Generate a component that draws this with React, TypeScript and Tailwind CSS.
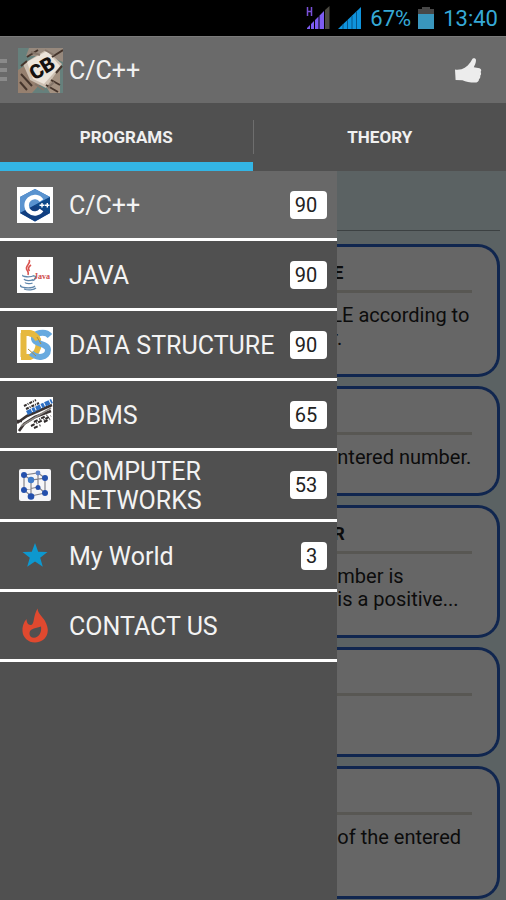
import React from "react";

interface MenuItem {
  label: string;
  count?: number;
  icon: React.ReactNode;
}

interface ProgramCard {
  title: string;
  lines: string[];
  // the drawer cuts through the first letter of these descriptions
  cut?: boolean;
}

const AppLogo = () => (
  <svg viewBox="0 0 45 45" className="size-[45px] shrink-0">
    <rect width="45" height="45" fill="#66807c" />
    <path d="M11 0H45V14L30 8L8 8Z" fill="#97897d" />
    <path d="M0 22L12 14L24 34L14 45H0Z" fill="#96806f" />
    <path d="M28 38L42 18V45H32Z" fill="#a39181" />
    <path d="M5 16L28 2L44 16L28 40L12 32Z" fill="#cdc0b2" />
    <path d="M9 14L29 3L42 18L26 36L15 31Z" fill="#ece4da" />
    <path d="M9 9L20 2M34 9L45 2M3 26L14 38M2 34L9 42M28 37L40 44M33 32L42 37M3 18L9 13M38 25L44 18" stroke="#45352c" strokeWidth="2" />
    <path d="M13 4L22 7M27 2L36 7M17 36L26 42M30 40L36 34" stroke="#85766a" strokeWidth="2" />
    <text
      x="24"
      y="27"
      transform="rotate(-32 24 20)"
      textAnchor="middle"
      fontSize="20"
      className="fill-[#15100e] font-black"
      style={{ fontFamily: "Roboto, sans-serif" }}
    >
      CB
    </text>
  </svg>
);

const ThumbIcon = () => (
  <svg viewBox="0 0 28 27" className="h-[27px] w-7" fill="#ececec">
    <path d="M1 12.5Q4 13 7.5 12.2C12 10.5 16 7 18.2 2.2C18.800 .8 22 .8 22 3.2C22 6 20.500 8.500 19.800 10.300L25.500 11.200C27.600 11.800 27.600 14 26.600 15C27.400 16 27.200 18 26.200 18.800C26.600 20.200 26 21.500 25 22.200C25 24.600 23 25.600 21 25.600C16 25.600 11.500 24.600 8.500 23.200L1.600 23Z" />
  </svg>
);

const CppIcon = () => (
  <svg viewBox="0 0 36 36" className="size-9 bg-white">
    <path d="M18 2L33 10V26L18 34.500L3 26V10Z" fill="#1f62ad" />
    <path d="M3 10L18 2L33 10L18 18L3 26Z" fill="#5a93cf" />
    <path d="M33 10V26L18 18Z" fill="#0d4788" />
    <path d="M3 26L18 18L33 26L18 34.500Z" fill="#123f80" />
    <path d="M24.500 13.500A8.200 8.200 0 1 0 24.500 23" fill="none" stroke="#fff" strokeWidth="4.500" />
    <path d="M22.500 18.300H27.500M25 16V20.600M28 18.300H32.500M30.300 16V20.600" stroke="#fff" strokeWidth="1.400" />
  </svg>
);

const JavaIcon = () => (
  <svg viewBox="0 0 36 36" className="size-9 bg-white" fill="none">
    <path d="M12 3C15 6 7 9 10 13C11 15 12 16 11 18M14 8C11 10 11 12 12.500 14" stroke="#d9534f" strokeWidth="1.600" />
    <path d="M6 18C4 20 14 20.500 17 18.500M7 22C8 24 14 24 16 22.500M8 25.500C9 27 14 27 15.500 26M16 19C20 18 19 23 15.500 23.500M4 28C1 31 15 32 18 29M7 32C11 33.500 17 33 19 31" stroke="#5f86ab" strokeWidth="1.300" />
    <text x="17" y="22" fontSize="8" fill="#cf4b4b" fontWeight="bold" style={{ fontFamily: "'Liberation Serif', serif" }}>
      Java
    </text>
  </svg>
);

const DataStructureIcon = () => (
  <svg viewBox="0 0 36 36" className="size-9 bg-white" fill="none">
    <path d="M6.500 6V30M4 6H12C24 7 25 25 13 30H4" stroke="#e6b93f" strokeWidth="6" />
    <path d="M33 9C28 3 16 6 17 12C18 18 31 16 31 23C31 31 20 32 14 26" stroke="#68aadf" strokeWidth="6" />
    <path d="M12 6C17 7 20 10 21 13" stroke="#e6b93f" strokeWidth="6" />
    <path d="M20 10L24 17M11 22L19 29" stroke="#b58f35" strokeWidth="1" />
  </svg>
);

const DbmsIcon = () => (
  <svg viewBox="0 0 36 36" className="size-9 bg-white" fill="none">
    <path d="M0 26L10 19L35 8M2 34L7 27L18 20L34 14M0 24L5 24" stroke="#3b3434" strokeWidth="2.600" />
    <path d="M4 29L14 23L34 11" stroke="#8a8580" strokeWidth="1.500" />
    <path d="M7 9L19 3M9 12L22 6" stroke="#35302f" strokeWidth="2" strokeDasharray="3 1 1 1" />
    <path d="M10 16L35 4" stroke="#2d6fc4" strokeWidth="4.500" strokeDasharray="5 1 3 1" />
    <path d="M14 29L34 19M17 31L24 28M27 25L33 22M17 25L31 18" stroke="#2f2b2b" strokeWidth="2" strokeDasharray="4 2 1 1" />
  </svg>
);

const NetworkIcon = () => (
  <svg viewBox="0 0 36 36" className="size-9">
    <rect x="2" y="2" width="32" height="32" rx="2" fill="#f6f6f8" />
    <path d="M7 8L21 6L28 11L14 13ZM7 8V23L14 29V13M21 6V20L28 26V11M7 23L21 20M14 29L28 26" fill="none" stroke="#85858d" strokeWidth="1.200" />
    <g fill="#2450ad">
      <circle cx="7" cy="8" r="3" />
      <circle cx="28" cy="11" r="3" />
      <circle cx="7" cy="23" r="3" />
      <circle cx="28" cy="26" r="3" />
      <circle cx="14" cy="29.500" r="3.300" />
      <circle cx="21" cy="20.500" r="2.500" />
    </g>
    <circle cx="21" cy="6" r="2.400" fill="#5b83cc" />
    <circle cx="14" cy="13" r="3.200" fill="#3f7bc9" />
  </svg>
);

const StarIcon = () => (
  <svg viewBox="0 0 36 36" className="size-9" fill="#0d98cf">
    <path d="M18 5L21.200 13.800L30.500 14L23.200 19.800L25.800 28.800L18 23.600L10.200 28.800L12.800 19.800L5.500 14L14.800 13.800Z" />
  </svg>
);

const FireIcon = () => (
  <svg viewBox="0 0 36 36" className="size-9">
    <path
      fill="#e0492f"
      fillRule="evenodd"
      d="M20.500 .5C21 6 26 9 28 13C30 17 31.500 21 30.500 25C29 31 24 34.500 18 34.500C11 34.500 6 29.500 5.500 23.500C5 19 6.500 14.500 9.500 11C9.500 14 11 17 13.500 17C18 17 15.500 9 20.500 .5ZM24 18.500C20 20 13 20 12.500 25C12.300 28 14 29.800 17 29.800C21.500 29.500 25 25 24 18.500Z"
    />
  </svg>
);

const menu: MenuItem[] = [
  { label: "C/C++", count: 90, icon: <CppIcon /> },
  { label: "JAVA", count: 90, icon: <JavaIcon /> },
  { label: "DATA STRUCTURE", count: 90, icon: <DataStructureIcon /> },
  { label: "DBMS", count: 65, icon: <DbmsIcon /> },
  { label: "COMPUTER NETWORKS", count: 53, icon: <NetworkIcon /> },
  { label: "My World", count: 3, icon: <StarIcon /> },
  { label: "CONTACT US", icon: <FireIcon /> },
];

const programs: ProgramCard[] = [
  { title: "E", lines: ["LE according to", "r."], cut: true },
  { title: "", lines: ["ntered number."] },
  { title: "R", lines: ["mber is", "is a positive..."] },
  { title: "", lines: [""] },
  { title: "", lines: ["of the entered", ""] },
];

const StatusBar = () => (
  <div className="flex h-9 items-center justify-end bg-black pr-2 text-[22px] text-[#36a9d6]">
    <svg viewBox="0 0 24 24" className="mr-2 h-6 w-6" fill="none">
      <path d="M1.500 1V10M5.500 1V10M1.500 5.500H5.500" stroke="#7a50d8" strokeWidth="1.500" />
      <path d="M1 23V22L4 19V23ZM5 23V18L8 15V23ZM9 23V14L12.500 10.500V23ZM13.500 23V9.500L18 5V23Z" fill="#7d5cf0" />
      <path d="M19 23V4L23.500 0V23Z" fill="#4c4a42" />
    </svg>
    <svg viewBox="0 0 24 24" className="mr-2 h-6 w-6">
      <path d="M0 23L23 1V23Z" fill="#0f93dc" />
      <path d="M5 18V23M9.500 14V23M14 10V23M18.500 5V23" stroke="#06568a" strokeWidth="1" />
    </svg>
    <span>67%</span>
    <svg viewBox="0 0 16 22" className="mx-[7px] h-[22px] w-4">
      <path d="M4 0H12V2H16V8H0V2H4Z" fill="#474747" />
      <path d="M0 7H16V22H0Z" fill="#3996bd" />
    </svg>
    <span className="ml-0.5">13:40</span>
  </div>
);

const App: React.FC = () => {
  return (
    <div className="flex min-h-screen flex-col bg-[#505050] font-[Roboto,sans-serif]">
      <StatusBar />

      <header className="flex h-[67px] items-center border-t border-[#7a7a7a] bg-[#6a6a6a]">
        <button aria-label="Open menu" className="flex w-[18px] flex-col gap-[5px]">
          <span className="h-1 w-[7px] bg-[#8a8a8a]" />
          <span className="h-1 w-[7px] bg-[#8a8a8a]" />
          <span className="h-1 w-[7px] bg-[#8a8a8a]" />
        </button>
        <AppLogo />
        <h1 className="ml-1.5 flex-1 pt-0.5 text-[25px] text-[#f0f0f0]">C/C++</h1>
        <button aria-label="Like" className="mr-6">
          <ThumbIcon />
        </button>
      </header>

      <nav className="flex h-[68px] items-stretch bg-[#505050] text-[17px] font-bold text-[#f0f0f0]">
        <button className="flex-1 border-b-9 border-[#33b5e5] pt-[11px]">PROGRAMS</button>
        <span className="my-[17px] w-px bg-[#6e6e6e]" />
        <button className="flex-1 pt-0.5">THEORY</button>
      </nav>

      <div className="flex flex-1">
        <aside className="w-2/3 shrink-0 bg-[#505050]">
          {menu.map((item, index) => (
            <button
              key={item.label}
              className={`flex min-h-[70px] w-full items-center border-b-3 border-white py-1 pr-2.5 pl-[17px] text-left ${
                index === 0 ? "bg-[#686868]" : ""
              }`}
            >
              <span className="shrink-0">{item.icon}</span>
              <span className="ml-4 flex-1 pt-0.5 text-[25px] leading-[29px] text-[#f3f3f3]">
                {item.label}
              </span>
              {item.count !== undefined && (
                <span className="rounded bg-white pr-2.5 pl-[5px] text-xl leading-7 text-[#222]">
                  {item.count}
                </span>
              )}
            </button>
          ))}
        </aside>

        <main className="min-w-0 flex-1 overflow-hidden bg-[#5b6263] pr-1.5">
          <input
            type="text"
            aria-label="Search programs"
            className="mb-[13px] block h-[60px] w-full border-b border-[#3c4142] bg-transparent px-2 outline-none"
          />
          <div className="flex flex-col gap-[9px]">
            {programs.map((program, index) => (
              <article
                key={index}
                className="rounded-r-[22px] border-3 border-l-0 border-[#10264f] bg-[#666] pt-3.5 pb-6 text-[#0c0c0c]"
              >
                <h2 className="-ml-1 h-6 text-lg leading-6 font-bold">{program.title}</h2>
                <hr className="mt-[5px] mr-[25px] mb-[11px] border-t-3 border-[#585753]" />
                <div className={`text-xl leading-[23px] whitespace-nowrap ${program.cut ? "-ml-1.5" : ""}`}>
                  {program.lines.map((line, i) => (
                    <p key={i} className="min-h-[23px]">
                      {line}
                    </p>
                  ))}
                </div>
              </article>
            ))}
          </div>
        </main>
      </div>
    </div>
  );
};

export default App;
